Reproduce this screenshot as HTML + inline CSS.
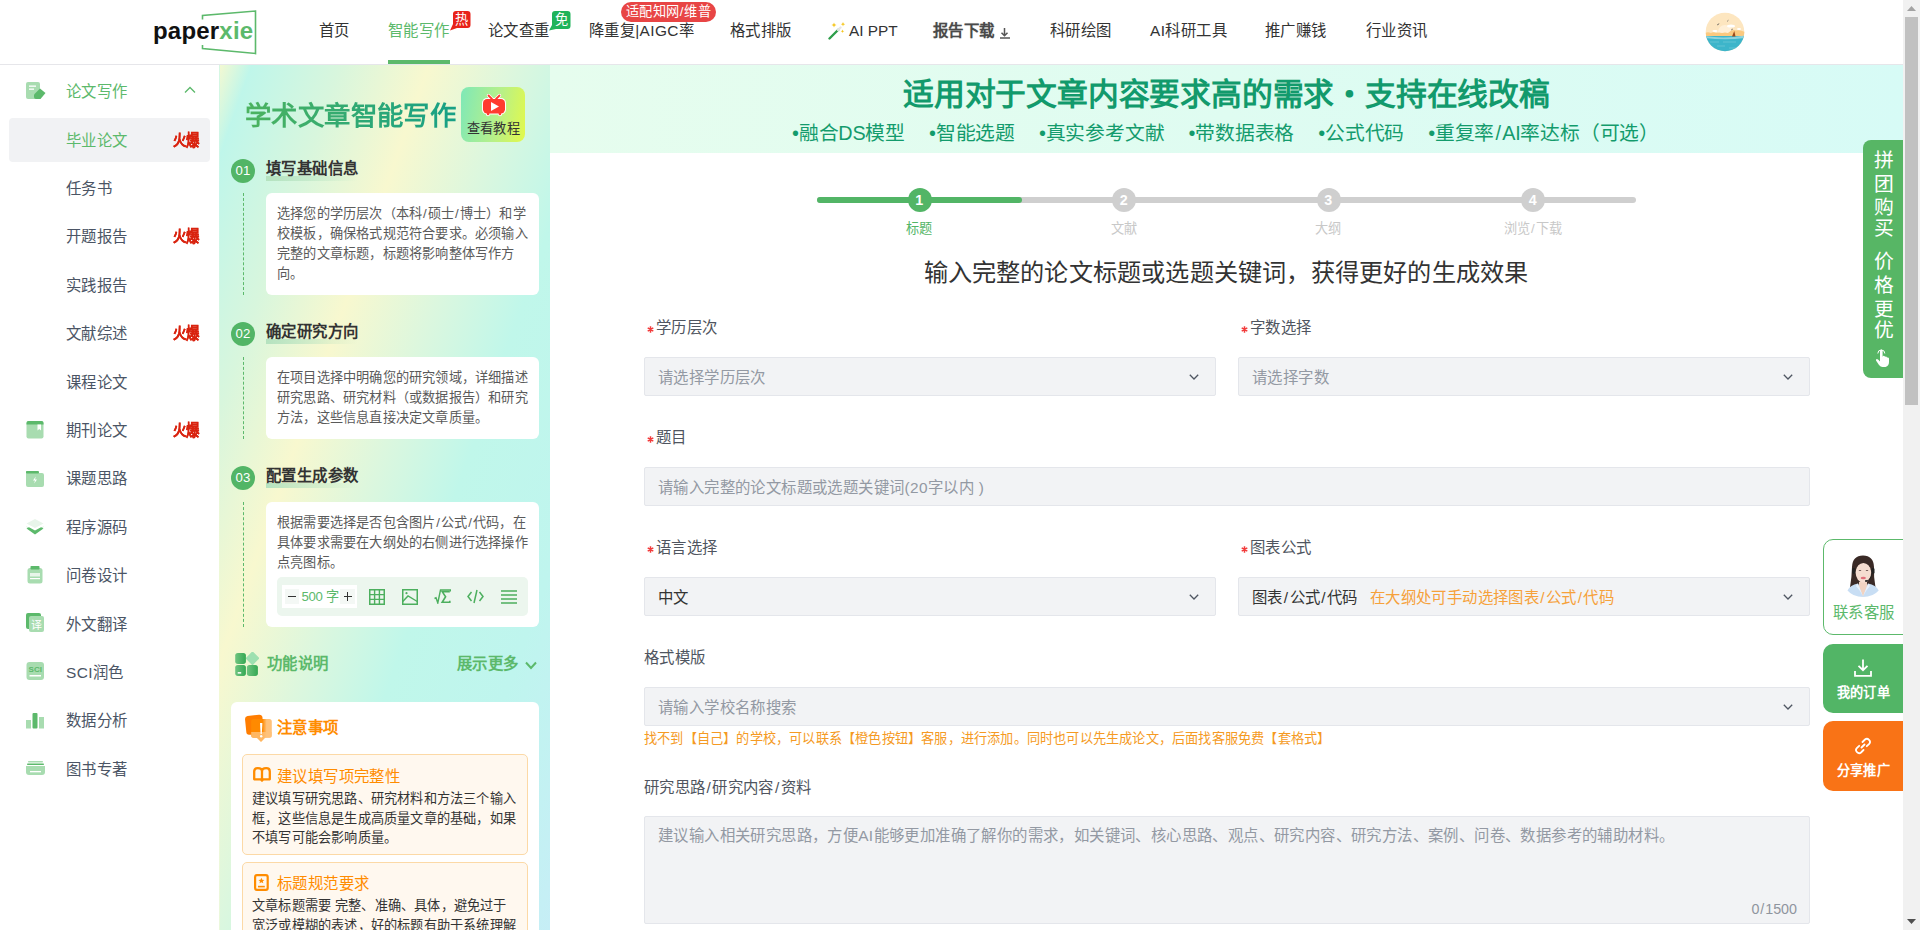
<!DOCTYPE html>
<html lang="zh-CN"><head><meta charset="utf-8">
<style>
*{box-sizing:border-box;margin:0;padding:0}
html,body{width:1920px;height:930px;overflow:hidden;background:#fff;font-family:"Liberation Sans",sans-serif;color:#333}
.a{position:absolute;white-space:nowrap}
#hdr{position:absolute;left:0;top:0;width:1903px;height:65px;background:#fff;border-bottom:1px solid #e6e6ea}
.nav{position:absolute;top:21.5px;font-size:15.4px;letter-spacing:0.4px;line-height:17px;color:#333}
.badge{position:absolute;color:#fff;font-size:13.2px;letter-spacing:0.2px;text-align:center}
#sb{position:absolute;left:1903px;top:0;width:17px;height:930px;background:#f1f1f1}
#side{position:absolute;left:0;top:65px;width:220px;height:865px;background:#fff}
.si{position:absolute;left:66px;font-size:15.4px;letter-spacing:0.4px;line-height:17px;color:#4b5565}
.hot{position:absolute;left:172.5px;font-size:15.4px;line-height:17px;color:#d9230f;font-weight:bold;transform:scaleX(0.87);transform-origin:0 0;letter-spacing:0;-webkit-text-stroke:0.25px #d9230f}
.sico{position:absolute;left:26px;width:19px;height:18px}

#lp{position:absolute;left:220px;top:65px;width:330px;height:865px;overflow:hidden;background:linear-gradient(109.3deg,#f3f9d2 0%,#bff6ea 5%,#d8f6dd 19%,#f8f8cf 33%,#dcf7de 47%,#c0f7ea 61%,#bff5ee 80%,#c6eef6 100%)}
.lpt{font-size:26.4px;letter-spacing:0.4px;line-height:30px;font-weight:bold;color:#3fae62;background:linear-gradient(90deg,#4cb35f,#17a086);-webkit-background-clip:text;background-clip:text;-webkit-text-fill-color:transparent}
.num{width:24px;height:24px;border-radius:50%;background:#52b566;color:#fff;font-size:13.2px;letter-spacing:0.2px;line-height:24px;text-align:center}
.sth{font-size:15.4px;letter-spacing:0.4px;line-height:17px;font-weight:bold;color:#333}
.hbar{width:92px;height:5px;background:linear-gradient(90deg,#b5e2bf,rgba(190,230,200,0))}
.dash{width:0;border-left:1px dashed #5cb96b}
.card{background:#fff;border-radius:6px}
.ct{font-size:13.2px;letter-spacing:0.2px;line-height:20px;color:#5a5a5a}
.tip{width:286px;background:#fff8ef;border:1px solid #fcd9a6;border-radius:5px}
.tiph{font-size:15.4px;letter-spacing:0.4px;line-height:17px;color:#ff8c00}
.tipt{font-size:13.2px;letter-spacing:0.2px;line-height:19.5px;color:#333}

#banner{position:absolute;left:550px;top:65px;width:1353px;height:88px;background:linear-gradient(90deg,#e6fdee 0%,#dffcf1 50%,#d7fbf6 100%)}
.btitle{font-size:30.8px;letter-spacing:-0.2px;line-height:36px;font-weight:bold;color:#129a6c}
.bsub{font-size:19.8px;letter-spacing:-0.2px;line-height:24px;color:#139b6c}
.bsub i{display:inline-block;width:24px}
.stc{width:24px;height:24px;border-radius:50%;color:#fff;font-weight:bold;font-size:14.3px;letter-spacing:0.3px;line-height:24px;text-align:center}
.stl{width:200px;text-align:center;font-size:13.2px;letter-spacing:0.2px;line-height:16px}
.star{font-size:13.2px;letter-spacing:0.2px;line-height:14px;color:#f56c6c}
.flab{font-size:15.4px;letter-spacing:0.4px;line-height:17px;color:#4f5560}
.fbox{background:#f2f3f5;border:1px solid #e4e6eb;border-radius:2px}
.ftxt{font-size:15.4px;letter-spacing:0.4px;line-height:17px;white-space:nowrap}
.sl{margin:0 0.065em}
</style></head><body>

<div id="hdr">
  <!-- logo -->
  <svg class="a" style="left:150px;top:8px" width="110" height="50" viewBox="0 0 110 50">
    <path d="M52.5 11.5 V7.5 L105.5 3 V45.5 L52.5 40.5 V37" fill="none" stroke="#5cb96b" stroke-width="1.6"/>
  </svg>
  <div class="a" style="left:153px;top:17px;font-size:24px;line-height:28px;font-weight:bold;color:#111;letter-spacing:0.2px">paper<span style="color:#5cb96b">xie</span></div>

  <div class="nav" style="left:319px">首页</div>
  <div class="nav" style="left:388px;color:#5cb96b">智能写作</div>
  <div class="a" style="left:388px;top:60px;width:62px;height:4px;background:#5cb96b"></div>
  <svg class="a" style="left:449px;top:10px" width="22" height="21" viewBox="0 0 22 21"><path d="M4 4 Q4 1 7 1 H18.5 Q21.5 1 21.5 4 V15 Q21.5 18 18.5 18 H8 L1 20.5 L4 14Z" fill="#e8231a"/></svg><div class="badge" style="left:453px;top:11px;width:18px;height:17px;font-size:13.2px;letter-spacing:0.2px;line-height:17px">热</div>
  <div class="nav" style="left:488px">论文查重</div>
  <svg class="a" style="left:548px;top:10px" width="23" height="21" viewBox="0 0 23 21"><path d="M4 4 Q4 1 7 1 H19.5 Q22.5 1 22.5 4 V16 Q22.5 19 19.5 19 H8 L1 20.5 L4 15Z" fill="#1fb35a"/></svg><div class="badge" style="left:552px;top:11px;width:19px;height:18px;font-size:13.2px;letter-spacing:0.2px;line-height:18px">免</div>
  <div class="nav" style="left:589px">降重复|AIGC率</div>
  <div class="badge" style="left:621px;top:2px;width:95px;height:20px;background:#e84545;border-radius:10px;line-height:20px">适配知网<span class="sl">/</span>维普</div>
  <div class="nav" style="left:730px">格式排版</div>
  <svg class="a" style="left:828px;top:22px" width="18" height="18" viewBox="0 0 18 18"><path d="M1.5 16.5 L10.5 7.5" stroke="#2e9e4a" stroke-width="2.4" stroke-linecap="round"/><path d="M10 8 L12.5 5.5" stroke="#e6e6e6" stroke-width="2.4" stroke-linecap="round"/><path d="M6 0.5 L6.7 2.3 L8.5 3 L6.7 3.7 L6 5.5 L5.3 3.7 L3.5 3 L5.3 2.3Z M15 0 L15.6 1.6 L17.2 2.2 L15.6 2.8 L15 4.4 L14.4 2.8 L12.8 2.2 L14.4 1.6Z M14.5 7.5 L15 8.8 L16.3 9.3 L15 9.8 L14.5 11.1 L14 9.8 L12.7 9.3 L14 8.8Z" fill="#f5c518"/></svg>
  <div class="nav" style="left:849px;letter-spacing:0">AI PPT</div>
  <div class="nav" style="left:933px;font-weight:bold;color:#4a4a4a;text-shadow:0 0 1px rgba(0,0,0,.25)">报告下载</div><svg class="a" style="left:999px;top:27px" width="12" height="12" viewBox="0 0 12 12"><path d="M5.5 1 V8.5 M2.5 5.8 L5.5 8.8 L8.5 5.8 M1 11 H11" fill="none" stroke="#555" stroke-width="1.5"/></svg>
  <div class="nav" style="left:1050px">科研绘图</div>
  <div class="nav" style="left:1150px">AI科研工具</div>
  <div class="nav" style="left:1265px">推广赚钱</div>
  <div class="nav" style="left:1366px">行业资讯</div>
  <!-- avatar -->
  <svg class="a" style="left:1705px;top:12px" width="40" height="40" viewBox="0 0 40 40"><defs><clipPath id="av"><circle cx="20" cy="20" r="19.3"/></clipPath></defs><g clip-path="url(#av)">
<rect x="0" y="0" width="40" height="40" fill="#fde6c0"/>
<circle cx="20" cy="20" r="7" fill="#fff0d8"/>
<ellipse cx="26" cy="14" rx="4" ry="1.6" fill="#fff"/><ellipse cx="10" cy="19" rx="2.6" ry="1.1" fill="#fff"/><ellipse cx="34" cy="17" rx="2" ry="1" fill="#fff"/>
<path d="M0 21 Q3 19.5 6 21 Q8 19.5 11 21 Q14 19.8 17 21 Q20 20 23 21 Q27 17 31 18.5 Q35 17.5 40 20 V25 H0Z" fill="#fbc97f"/>
<path d="M0 24 H40 V40 H0Z" fill="#3db5ca"/>
<path d="M0 24 Q20 27 40 23.5 V26 Q20 28.5 0 26Z" fill="#8fd3dc"/>
<path d="M27 24.5 L29.3 19 L30.5 24.5Z" fill="#9b4a1c"/>
<path d="M5 30 H14 M18 30 H31 M12 34 H20 M24 36 H34" stroke="#6cc8d6" stroke-width="0.8"/>
<path d="M12 13 L13.5 12.3 L14 11.5 M22 9.5 L23.5 8.2 M26 18 L28 17" stroke="#555" stroke-width="0.6"/>
</g></svg>
</div>

<div id="side">
<div class="a" style="left:9px;top:53px;width:201px;height:44px;background:#f1f2f4;border-radius:4px"></div>
<div class="si" style="top:17.5px;color:#5cb96b">论文写作</div>
<svg class="sico" style="top:17px;height:18px;width:20px" viewBox="0 0 20 18"><rect x="0" y="0" width="14" height="17" rx="2" fill="#a8dcb0"/><rect x="3" y="3.5" width="7" height="1.3" fill="#fff"/><rect x="3" y="6.5" width="5" height="1.3" fill="#fff"/><path d="M8 12.5 L14 6.5 L19.5 11 L14.5 17 H10 Q8 17 8 15 Z" fill="#5cb96b"/></svg>
<div class="si" style="top:66.5px;color:#5cb96b">毕业论文</div>
<div class="hot" style="top:66.5px">火爆</div>
<div class="si" style="top:114.5px;color:#4b5565">任务书</div>
<div class="si" style="top:162.5px;color:#4b5565">开题报告</div>
<div class="hot" style="top:162.5px">火爆</div>
<div class="si" style="top:211.5px;color:#4b5565">实践报告</div>
<div class="si" style="top:259.5px;color:#4b5565">文献综述</div>
<div class="hot" style="top:259.5px">火爆</div>
<div class="si" style="top:308.5px;color:#4b5565">课程论文</div>
<div class="si" style="top:356.5px;color:#4b5565">期刊论文</div>
<div class="hot" style="top:356.5px">火爆</div>
<svg class="sico" style="top:356px" viewBox="0 0 19 18"><rect x="0.5" y="0" width="17" height="17.5" rx="2" fill="#a8dcb0"/><path d="M0.5 2 Q0.5 0 2.5 0 H15.5 Q17.5 0 17.5 2 V3.5 H0.5Z" fill="#5cb96b"/><path d="M11.5 3.5 H15 V9.5 L13.25 8 L11.5 9.5Z" fill="#fff"/></svg>
<div class="si" style="top:404.5px;color:#4b5565">课题思路</div>
<svg class="sico" style="top:405px;height:18px" viewBox="0 0 19 18"><path d="M0 3 Q0 1 2 1 H7 L9 3 H16 Q18 3 18 5 V15 Q18 17 16 17 H2 Q0 17 0 15Z" fill="#a8dcb0"/><path d="M0 3 Q0 1 2 1 H7 L9 3 H0Z" fill="#5cb96b"/><rect x="0" y="1" width="13" height="2.5" rx="1" fill="#5cb96b"/><path d="M9.8 6.5 L7 10.5 H9 L8.2 13.5 L11 9.5 H9Z" fill="#fff"/></svg>
<div class="si" style="top:453.5px;color:#4b5565">程序源码</div>
<svg class="sico" style="top:454px;height:17px" viewBox="0 0 19 17"><path d="M9 0 L17.5 4.5 L9 9 L0.5 4.5Z" fill="#e8f5ea"/><path d="M0.5 7.5 L9 12 L17.5 7.5 L17.5 8 L9 13 L0.5 8Z" fill="#a8dcb0"/><path d="M0.5 9.5 L3 8.2 L9 11.5 L15 8.2 L17.5 9.5 L9 15.5Z" fill="#5cb96b"/></svg>
<div class="si" style="top:501.5px;color:#4b5565">问卷设计</div>
<svg class="sico" style="top:501px" viewBox="0 0 19 18"><rect x="1.5" y="2" width="15" height="15.5" rx="2.5" fill="#a8dcb0"/><rect x="4.5" y="0" width="9" height="3.5" rx="0.8" fill="#5cb96b"/><rect x="4" y="7" width="10" height="3.5" fill="#e8f5ea"/><rect x="4" y="12" width="10" height="1.2" fill="#fff"/></svg>
<div class="si" style="top:550.5px;color:#4b5565">外文翻译</div>
<svg class="sico" style="top:548px;height:20px" viewBox="0 0 19 20"><rect x="0" y="0" width="15" height="16" rx="2" fill="#5cb96b"/><rect x="3" y="3" width="15" height="16" rx="2" fill="#a8dcb0"/><text x="10.5" y="15.5" font-size="11" fill="#fff" text-anchor="middle" font-family="sans-serif">译</text></svg>
<div class="si" style="top:598.5px;color:#4b5565">SCI润色</div>
<svg class="sico" style="top:597px" viewBox="0 0 19 18"><rect x="0.5" y="0" width="17.5" height="18" rx="3" fill="#a8dcb0"/><text x="9.25" y="10" font-size="8" font-weight="bold" fill="#5cb96b" text-anchor="middle" font-family="Liberation Sans,sans-serif">SCI</text><rect x="3.5" y="13" width="11.5" height="1.5" fill="#fff"/></svg>
<div class="si" style="top:646.5px;color:#4b5565">数据分析</div>
<svg class="sico" style="top:648px;height:16px" viewBox="0 0 19 16"><rect x="0" y="7" width="5" height="8.5" fill="#a8dcb0"/><rect x="6.5" y="0" width="5" height="15.5" rx="1" fill="#5cb96b"/><rect x="13" y="4" width="5" height="11.5" fill="#a8dcb0"/></svg>
<div class="si" style="top:695.5px;color:#4b5565">图书专著</div>
<svg class="sico" style="top:696px;height:15px" viewBox="0 0 19 15"><rect x="2" y="0" width="15" height="1.5" rx="0.7" fill="#a8dcb0"/><rect x="1" y="2.5" width="17" height="1.5" rx="0.7" fill="#5cb96b"/><path d="M0 5 H19 V11 Q19 14 16 14 H3 Q0 14 0 11Z" fill="#a8dcb0"/><rect x="4" y="10" width="11" height="1.3" fill="#fff"/></svg>
<svg class="a" style="left:184px;top:21px" width="12" height="8" viewBox="0 0 12 8"><path d="M1 6.5 L6 1.5 L11 6.5" fill="none" stroke="#5cb96b" stroke-width="1.3"/></svg>
</div>


<div class="a" style="left:219px;top:65px;width:1px;height:865px;background:linear-gradient(180deg,#d6f7e2 0%,#c7f6ea 15%,#e7f8d8 45%,#f3f9d4 70%,#eaf8dc 100%)"></div>
<div id="lp">
  <div class="a lpt" style="left:25px;top:36px">学术文章智能写作</div>
  <div class="a" style="left:241px;top:22px;width:64px;height:55px;border-radius:8px;background:linear-gradient(100deg,#7ee8b8 0%,#b6f08a 55%,#e3f94a 100%)">
    <svg class="a" style="left:19.5px;top:7px" width="26" height="23" viewBox="0 0 26 23"><path d="M7.5 1.5 L11 5 M18.5 1.5 L15 5" stroke="#fff" stroke-width="3.2" stroke-linecap="round"/><rect x="1" y="4" width="24" height="16.5" rx="5" fill="#fff"/><rect x="5" y="18" width="4" height="4.2" rx="2" fill="#fff"/><rect x="17" y="18" width="4" height="4.2" rx="2" fill="#fff"/><path d="M7.5 1.5 L11 5 M18.5 1.5 L15 5" stroke="#ff3b2f" stroke-width="1.8" stroke-linecap="round"/><rect x="2" y="5" width="22" height="14.5" rx="4.2" fill="#ff3b2f"/><rect x="5.8" y="18" width="2.6" height="3.3" rx="1.3" fill="#ff3b2f"/><rect x="17.6" y="18" width="2.6" height="3.3" rx="1.3" fill="#ff3b2f"/><path d="M10 8 V17 L18 12.5Z" fill="#fff"/></svg>
    <div class="a" style="left:6px;top:34px;font-size:13.2px;letter-spacing:0.2px;line-height:15px;color:#333">查看教程</div>
  </div>
  <div class="a num" style="left:11px;top:93.5px">01</div>
  <div class="a hbar" style="left:46px;top:110.5px"></div>
  <div class="a sth" style="left:46px;top:94.5px">填写基础信息</div>
  <div class="a dash" style="left:23px;top:128px;height:102px"></div>
  <div class="a card" style="left:46px;top:128px;width:273px;height:102px"><div class="a ct" style="left:11px;top:11px">选择您的学历层次（本科<span class="sl">/</span>硕士<span class="sl">/</span>博士）和学<br>校模板，确保格式规范符合要求。必须输入<br>完整的文章标题，标题将影响整体写作方<br>向。</div></div>
  <div class="a num" style="left:11px;top:257px">02</div>
  <div class="a hbar" style="left:46px;top:274px"></div>
  <div class="a sth" style="left:46px;top:258px">确定研究方向</div>
  <div class="a dash" style="left:23px;top:292px;height:81.5px"></div>
  <div class="a card" style="left:46px;top:292px;width:273px;height:81.5px"><div class="a ct" style="left:11px;top:11px">在项目选择中明确您的研究领域，详细描述<br>研究思路、研究材料（或数据报告）和研究<br>方法，这些信息直接决定文章质量。</div></div>
  <div class="a num" style="left:11px;top:400.5px">03</div>
  <div class="a hbar" style="left:46px;top:417.5px"></div>
  <div class="a sth" style="left:46px;top:401.5px">配置生成参数</div>
  <div class="a dash" style="left:23px;top:436.5px;height:125px"></div>
  <div class="a card" style="left:46px;top:436.5px;width:273px;height:125px"><div class="a ct" style="left:11px;top:11px">根据需要选择是否包含图片<span class="sl">/</span>公式<span class="sl">/</span>代码，在<br>具体要求需要在大纲处的右侧进行选择操作<br>点亮图标。</div><div class="a" style="left:11px;top:75.5px;width:251px;height:38.5px;background:#ecf6ee;border-radius:5px">
<div class="a" style="left:5px;top:8px;width:75px;height:23px;background:#fff"></div>
<div class="a" style="left:7.5px;top:12px;width:14.5px;height:14.5px;background:#f4f8f5"></div>
<div class="a" style="left:63px;top:12px;width:14.5px;height:14.5px;background:#f4f8f5"></div>
<div class="a" style="left:11px;top:19px;width:8px;height:1.2px;background:#333"></div>
<div class="a" style="left:66.5px;top:19px;width:8.5px;height:1.2px;background:#333"></div>
<div class="a" style="left:70.2px;top:15px;width:1.2px;height:9px;background:#333"></div>
<div class="a" style="left:24.5px;top:11px;font-size:13.2px;line-height:17px;color:#5cb96b;letter-spacing:-0.3px">500<span style="margin-left:3px">字</span></div>
<svg class="a" style="left:91.5px;top:11.5px" width="16" height="16" viewBox="0 0 16 16"><rect x="0.75" y="0.75" width="14.5" height="14.5" fill="none" stroke="#4caf5e" stroke-width="1.5"/><path d="M5.6 0.75 V15.25 M10.4 0.75 V15.25 M0.75 5.6 H15.25 M0.75 10.4 H15.25" stroke="#4caf5e" stroke-width="1.4"/></svg>
<svg class="a" style="left:124.5px;top:11.5px" width="16" height="16" viewBox="0 0 16 16"><rect x="0.75" y="0.75" width="14.5" height="14.5" fill="none" stroke="#4caf5e" stroke-width="1.5"/><path d="M0.75 12.5 L6 7 L15.25 12.5" fill="none" stroke="#4caf5e" stroke-width="1.4"/><circle cx="4.5" cy="4.2" r="1.1" fill="#4caf5e"/></svg>
<svg class="a" style="left:157px;top:12px" width="17" height="15" viewBox="0 0 17 15"><path d="M0.5 9.5 L2 8.8 L3.8 14 L6.5 1 H16.5 V2.5" fill="none" stroke="#4caf5e" stroke-width="1.4"/><path d="M15.8 2.6 H8.2 L11.6 7.8 L8.2 13.2 H15.8 V11.8" fill="none" stroke="#4caf5e" stroke-width="1.6"/></svg>
<svg class="a" style="left:190px;top:12px" width="17" height="15" viewBox="0 0 17 15"><path d="M4.5 3 L1 7.5 L4.5 12 M12.5 3 L16 7.5 L12.5 12 M10 1 L7 14" fill="none" stroke="#4caf5e" stroke-width="1.5"/></svg>
<svg class="a" style="left:223.5px;top:12.5px" width="16.5" height="14" viewBox="0 0 16.5 14"><path d="M0 1 H16.5 M0 5 H16.5 M0 9 H16.5 M0 13 H16.5" stroke="#4caf5e" stroke-width="1.5"/></svg>
</div></div>
  <div class="a" style="left:15px;top:587px;width:24px;height:24px">
    <svg width="24" height="25" viewBox="0 0 24 25"><defs><linearGradient id="gq" x1="0" x2="1" y1="0" y2="0"><stop offset="0" stop-color="#6fc480"/><stop offset="1" stop-color="#34a853"/></linearGradient></defs><path d="M17.5 0.1 L23.7 6.3 L17.5 12.5 L11.3 6.3Z" fill="#9de0b0" stroke="#9de0b0" stroke-width="1.2" stroke-linejoin="round"/><rect x="0.2" y="1" width="10.7" height="10.9" rx="2.6" fill="url(#gq)"/><rect x="0.2" y="13" width="10.7" height="10.9" rx="2.6" fill="url(#gq)"/><rect x="11.9" y="13" width="11" height="10.9" rx="2.6" fill="url(#gq)"/><rect x="2.7" y="20.1" width="3.5" height="1.5" fill="#fff"/></svg>
  </div>
  <div class="a" style="left:47px;top:590px;font-size:15.4px;letter-spacing:0.4px;line-height:17px;font-weight:bold;color:#5cb96b">功能说明</div>
  <div class="a" style="left:237px;top:590px;font-size:15.4px;letter-spacing:0.4px;line-height:17px;font-weight:bold;color:#5cb96b">展示更多</div>
  <svg class="a" style="left:305px;top:595.5px" width="12" height="9" viewBox="0 0 12 9"><path d="M1 1.5 L6 7 L11 1.5" fill="none" stroke="#5cb96b" stroke-width="2"/></svg>
  <div class="a" style="left:11px;top:637px;width:308px;height:300px;background:#fff;border-radius:6px">
    <svg class="a" style="left:13px;top:12px" width="30" height="30" viewBox="0 0 30 30"><defs><linearGradient id="go" x1="0" x2="1" y1="0" y2="0"><stop offset="0" stop-color="#ff8a00"/><stop offset="0.55" stop-color="#ff8a00"/><stop offset="0.75" stop-color="#ffc27a"/><stop offset="1" stop-color="#ffc27a"/></linearGradient></defs><path d="M1 5 Q1 2.5 3.5 2 L15 0.8 Q18 0.5 18.5 3.5 L19 18 Q19 20.8 16.2 20.8 H5 Q2.5 20.8 2.3 18Z" fill="#ff7d00"/><path d="M7.2 7.5 Q7.2 5 9.7 5 H25.3 Q27.8 5 27.8 7.5 V21.3 Q27.8 23.8 25.3 23.8 H21 L17 27.8 L13 23.8 H9.7 Q7.2 23.8 7.2 21.3Z" fill="url(#go)"/><path d="M7.2 18 V21.3 Q7.2 23.8 9.7 23.8 H13 L17 27.8 L21 23.8 H25.3 Q27.8 23.8 27.8 21.3 V18Z" fill="#ffc27a" opacity="0.8"/><path d="M16 9 H18.4 L17.8 20 H16.6Z" fill="#fff"/><circle cx="17.2" cy="22.2" r="1.2" fill="#fff"/></svg>
    <div class="a" style="left:46px;top:17px;font-size:15.4px;letter-spacing:0.4px;line-height:17px;font-weight:bold;color:#ff8c00">注意事项</div>
    <div class="a tip" style="left:11px;top:52px;height:101px">
      <svg class="a" style="left:10px;top:12px" width="18" height="15" viewBox="0 0 18 15"><path d="M1.2 12.3 V4.5 Q1.2 1.2 4.8 1.2 Q9 1.2 9 4.5 Q9 1.2 13.2 1.2 Q16.8 1.2 16.8 4.5 V12.3 H10.3 L9 13.6 L7.7 12.3Z M9 4.5 V12.3" fill="none" stroke="#ff8c00" stroke-width="2.3" stroke-linejoin="round"/></svg>
      <div class="a tiph" style="left:34px;top:13px">建议填写项完整性</div>
      <div class="a tipt" style="left:9px;top:34px">建议填写研究思路、研究材料和方法三个输入<br>框，这些信息是生成高质量文章的基础，如果<br>不填写可能会影响质量。</div>
    </div>
    <div class="a tip" style="left:11px;top:160px;height:120px">
      <svg class="a" style="left:11px;top:10.5px" width="15" height="17" viewBox="0 0 15 17"><rect x="1.1" y="1.1" width="12.6" height="14.8" rx="1.8" fill="none" stroke="#ff8c00" stroke-width="2.2"/><path d="M7.4 3.8 L8.3 5.8 L10.4 6 L8.8 7.3 L9.3 9.3 L7.4 8.2 L5.5 9.3 L6 7.3 L4.4 6 L6.5 5.8Z" fill="#ff8c00"/><rect x="4" y="11.8" width="6.8" height="1.6" fill="#ff8c00"/></svg>
      <div class="a tiph" style="left:34px;top:12px">标题规范要求</div>
      <div class="a tipt" style="left:9px;top:33px">文章标题需要 完整、准确、具体，避免过于<br>宽泛或模糊的表述，好的标题有助于系统理解</div>
    </div>
  </div>
</div>


<div id="banner">
  <div class="a btitle" style="left:0;width:1353px;text-align:center;top:12px">适用对于文章内容要求高的需求<span>・</span>支持在线改稿</div>
  <div class="a bsub" style="left:242px;top:56px">•融合DS模型<i></i>•智能选题<i></i>•真实参考文献<i></i>•带数据表格<i></i>•公式代码<i></i>•重复率<span class="sl">/</span>AI率达标（可选）</div>
</div>
<!-- steps -->
<div class="a" style="left:817px;top:197px;width:819px;height:6px;border-radius:3px;background:#cfcfcf"></div>
<div class="a" style="left:817px;top:197px;width:205px;height:6px;border-radius:3px;background:#52b566"></div>
<div class="a stc" style="left:907.5px;top:188px;background:#52b566">1</div>
<div class="a stl" style="left:819.5px;top:221px;color:#52b566">标题</div>
<div class="a stc" style="left:1112px;top:188px;background:#cfcfcf">2</div>
<div class="a stl" style="left:1024px;top:221px;color:#c8c8c8">文献</div>
<div class="a stc" style="left:1316.5px;top:188px;background:#cfcfcf">3</div>
<div class="a stl" style="left:1228.5px;top:221px;color:#c8c8c8">大纲</div>
<div class="a stc" style="left:1521px;top:188px;background:#cfcfcf">4</div>
<div class="a stl" style="left:1433px;top:221px;color:#c8c8c8">浏览<span class="sl">/</span>下载</div>
<div class="a" style="left:726px;width:1000px;text-align:center;top:258px;font-size:24.2px;letter-spacing:0.2px;line-height:30px;color:#333">输入完整的论文标题或选题关键词，获得更好的生成效果</div>
<svg class="a" style="left:646.5px;top:326.0px" width="7" height="7" viewBox="0 0 7 7"><path d="M3.5 0.3 V6.7 M0.7 1.9 L6.3 5.1 M0.7 5.1 L6.3 1.9" stroke="#f23c3c" stroke-width="1.5"/></svg><div class="a flab" style="left:656px;top:319.0px">学历层次</div>
<div class="a fbox" style="left:644px;top:357px;width:572px;height:39px"><div class="a ftxt" style="left:13px;top:10.5px;color:#9399a3">请选择学历层次</div></div><svg class="a" style="left:1188px;top:373.0px" width="12" height="8" viewBox="0 0 12 8"><path d="M1.8 1.8 L6 6 L10.2 1.8" fill="none" stroke="#4e5561" stroke-width="1.3"/></svg>
<svg class="a" style="left:1240.5px;top:326.0px" width="7" height="7" viewBox="0 0 7 7"><path d="M3.5 0.3 V6.7 M0.7 1.9 L6.3 5.1 M0.7 5.1 L6.3 1.9" stroke="#f23c3c" stroke-width="1.5"/></svg><div class="a flab" style="left:1250px;top:319.0px">字数选择</div>
<div class="a fbox" style="left:1238px;top:357px;width:572px;height:39px"><div class="a ftxt" style="left:13px;top:10.5px;color:#9399a3">请选择字数</div></div><svg class="a" style="left:1782px;top:373.0px" width="12" height="8" viewBox="0 0 12 8"><path d="M1.8 1.8 L6 6 L10.2 1.8" fill="none" stroke="#4e5561" stroke-width="1.3"/></svg>
<svg class="a" style="left:646.5px;top:436.0px" width="7" height="7" viewBox="0 0 7 7"><path d="M3.5 0.3 V6.7 M0.7 1.9 L6.3 5.1 M0.7 5.1 L6.3 1.9" stroke="#f23c3c" stroke-width="1.5"/></svg><div class="a flab" style="left:656px;top:429.0px">题目</div>
<div class="a fbox" style="left:644px;top:467px;width:1166px;height:39px"><div class="a ftxt" style="left:13px;top:10.5px;color:#9399a3">请输入完整的论文标题或选题关键词(20字以内 )</div></div>
<svg class="a" style="left:646.5px;top:546.0px" width="7" height="7" viewBox="0 0 7 7"><path d="M3.5 0.3 V6.7 M0.7 1.9 L6.3 5.1 M0.7 5.1 L6.3 1.9" stroke="#f23c3c" stroke-width="1.5"/></svg><div class="a flab" style="left:656px;top:539.0px">语言选择</div>
<div class="a fbox" style="left:644px;top:577px;width:572px;height:39px"><div class="a ftxt" style="left:13px;top:10.5px;color:#333">中文</div></div><svg class="a" style="left:1188px;top:593.0px" width="12" height="8" viewBox="0 0 12 8"><path d="M1.8 1.8 L6 6 L10.2 1.8" fill="none" stroke="#4e5561" stroke-width="1.3"/></svg>
<svg class="a" style="left:1240.5px;top:546.0px" width="7" height="7" viewBox="0 0 7 7"><path d="M3.5 0.3 V6.7 M0.7 1.9 L6.3 5.1 M0.7 5.1 L6.3 1.9" stroke="#f23c3c" stroke-width="1.5"/></svg><div class="a flab" style="left:1250px;top:539.0px">图表公式</div>
<div class="a fbox" style="left:1238px;top:577px;width:572px;height:39px"><div class="a ftxt" style="left:13px;top:10.5px;color:#333">图表<span class="sl">/</span>公式<span class="sl">/</span>代码<span style="color:#f6a13a;margin-left:12px">在大纲处可手动选择图表<span class="sl">/</span>公式<span class="sl">/</span>代码</span></div></div><svg class="a" style="left:1782px;top:593.0px" width="12" height="8" viewBox="0 0 12 8"><path d="M1.8 1.8 L6 6 L10.2 1.8" fill="none" stroke="#4e5561" stroke-width="1.3"/></svg>
<div class="a flab" style="left:644px;top:649.0px">格式模版</div>
<div class="a fbox" style="left:644px;top:687px;width:1166px;height:39px"><div class="a ftxt" style="left:13px;top:10.5px;color:#9399a3">请输入学校名称搜索</div></div><svg class="a" style="left:1782px;top:703.0px" width="12" height="8" viewBox="0 0 12 8"><path d="M1.8 1.8 L6 6 L10.2 1.8" fill="none" stroke="#4e5561" stroke-width="1.3"/></svg>
<div class="a" style="left:644px;top:731px;font-size:13.2px;letter-spacing:0.2px;line-height:16px;color:#f59a23">找不到【自己】的学校，可以联系【橙色按钮】客服，进行添加。同时也可以先生成论文，后面找客服免费【套格式】</div>
<div class="a flab" style="left:644px;top:779.0px">研究思路<span class="sl">/</span>研究内容<span class="sl">/</span>资料</div>
<div class="a fbox" style="left:644px;top:816px;width:1166px;height:108px"><div class="a ftxt" style="left:13px;top:9.5px;color:#9399a3">建议输入相关研究思路，方便AI能够更加准确了解你的需求，如关键词、核心思路、观点、研究内容、研究方法、案例、问卷、数据参考的辅助材料。</div><div class="a" style="right:12px;top:84px;font-size:14.3px;letter-spacing:0;line-height:17px;color:#8f959e">0<span class="sl">/</span>1500</div></div>


<div class="a" style="left:1863px;top:140px;width:40px;height:238px;background:#57b665;border-radius:8px 0 0 8px"></div>
<div class="a" style="left:1873.5px;top:149px;font-size:19.8px;letter-spacing:-0.2px;line-height:22px;color:#fff">拼</div>
<div class="a" style="left:1873.5px;top:173px;font-size:19.8px;letter-spacing:-0.2px;line-height:22px;color:#fff">团</div>
<div class="a" style="left:1873.5px;top:196px;font-size:19.8px;letter-spacing:-0.2px;line-height:22px;color:#fff">购</div>
<div class="a" style="left:1873.5px;top:217px;font-size:19.8px;letter-spacing:-0.2px;line-height:22px;color:#fff">买</div>
<div class="a" style="left:1873.5px;top:250px;font-size:19.8px;letter-spacing:-0.2px;line-height:22px;color:#fff">价</div>
<div class="a" style="left:1873.5px;top:273.5px;font-size:19.8px;letter-spacing:-0.2px;line-height:22px;color:#fff">格</div>
<div class="a" style="left:1873.5px;top:297.5px;font-size:19.8px;letter-spacing:-0.2px;line-height:22px;color:#fff">更</div>
<div class="a" style="left:1873.5px;top:319px;font-size:19.8px;letter-spacing:-0.2px;line-height:22px;color:#fff">优</div>
<svg class="a" style="left:1874px;top:349px" width="18" height="19" viewBox="0 0 18 19"><path d="M6 2 Q6 0.5 7.3 0.5 Q8.6 0.5 8.6 2 V8 L9 7 Q10.5 6.5 11 7.8 Q12.5 7.2 13 8.5 Q14.8 8 15 9.5 V13 Q15 17 11.5 18 H8.5 Q6.5 18 5 16 L2 11.5 Q1.5 10 3 10 Q4.2 10 6 12.5Z" fill="#fff"/><path d="M3.8 4.5 Q3.8 1 7.3 1 Q10.8 1 10.8 4.5" fill="none" stroke="#fff" stroke-width="1"/></svg>
<div class="a" style="left:1823px;top:539px;width:90px;height:96px;background:#fff;border:1px solid #5cb96b;border-radius:10px 0 0 10px"></div>
<svg class="a" style="left:1840px;top:550px" width="46" height="50" viewBox="0 0 46 50">
 <path d="M23 5.6 Q12.5 5.8 12 17 Q11.8 27 10 37.5 L15 38.5 L31 38.5 L35.5 37.5 Q33.5 27 34 17 Q33.5 5.8 23 5.6Z" fill="#3a2a26"/>
 <path d="M19 32 H27 V46 H19Z" fill="#f1d3c2"/>
 <path d="M7.5 40.5 Q10 35 18 33.5 L23 46.5 L28 33.5 Q36 35 38.7 40.5 Q33 47 23 47 Q13 47 7.5 40.5Z" fill="#c8def4"/>
 <path d="M18 33.5 L23 46.5 L20 41 L16 36Z M28 33.5 L23 46.5 L26 41 L30 36Z" fill="#e8f1fb"/>
 <ellipse cx="23.4" cy="22.3" rx="7.8" ry="10.5" fill="#f5ddd0"/>
 <path d="M15.6 21 Q16 10.5 23.4 10.8 Q30.5 10.5 31.2 21 Q29.5 13.5 23.4 13 Q17.2 13.5 15.6 21Z" fill="#3a2a26"/>
 <ellipse cx="20" cy="20.5" rx="1.3" ry="0.6" fill="#6b5550"/><ellipse cx="27" cy="20.5" rx="1.3" ry="0.6" fill="#6b5550"/>
 <ellipse cx="23.3" cy="28" rx="2.6" ry="1.2" fill="#e0707a"/>
 <rect x="12.2" y="18" width="3" height="6" rx="1.4" fill="#222"/><rect x="31.5" y="18" width="3" height="6" rx="1.4" fill="#222"/>
 <path d="M32 24 Q31 30 26 31" stroke="#222" stroke-width="0.9" fill="none"/><circle cx="26" cy="31" r="1" fill="#222"/>
</svg>
<div class="a" style="left:1833px;top:603.5px;font-size:15.4px;letter-spacing:0.4px;line-height:17px;color:#5cb96b">联系客服</div>
<div class="a" style="left:1823px;top:644px;width:90px;height:69px;background:#52b566;border-radius:10px 0 0 10px"></div>
<svg class="a" style="left:1854px;top:659px" width="18" height="18" viewBox="0 0 18 18"><path d="M9 0.5 V11 M4.5 6.8 L9 11.2 L13.5 6.8 M1 12 V16.8 H17 V12" fill="none" stroke="#fff" stroke-width="1.8"/></svg>
<div class="a" style="left:1837px;top:684.5px;font-size:13.2px;letter-spacing:0.2px;line-height:16px;font-weight:bold;color:#fff">我的订单</div>
<div class="a" style="left:1823px;top:721px;width:90px;height:70px;background:#f97316;border-radius:10px 0 0 10px"></div>
<svg class="a" style="left:1854px;top:737px" width="18" height="18" viewBox="0 0 18 18"><path d="M7.5 10.5 L10.5 7.5 M8.5 5 L11 2.5 Q13 0.8 15 2.8 Q17 4.8 15.2 6.8 L12.8 9.2 M9.5 13 L7 15.5 Q5 17.2 3 15.2 Q1 13.2 2.8 11.2 L5.2 8.8" fill="none" stroke="#fff" stroke-width="1.8" stroke-linecap="round"/></svg>
<div class="a" style="left:1837px;top:762.5px;font-size:13.2px;letter-spacing:0.2px;line-height:16px;font-weight:bold;color:#fff">分享推广</div>

<div id="sb">
  <div class="a" style="left:2px;top:17px;width:13px;height:388px;background:#c1c1c1"></div>
  <svg class="a" style="left:4px;top:6px" width="9" height="5" viewBox="0 0 9 5"><path d="M0 5 L4.5 0 L9 5Z" fill="#a3a3a3"/></svg>
  <svg class="a" style="left:4px;top:919px" width="9" height="5" viewBox="0 0 9 5"><path d="M0 0 L4.5 5 L9 0Z" fill="#505050"/></svg>
</div>
</body></html>
